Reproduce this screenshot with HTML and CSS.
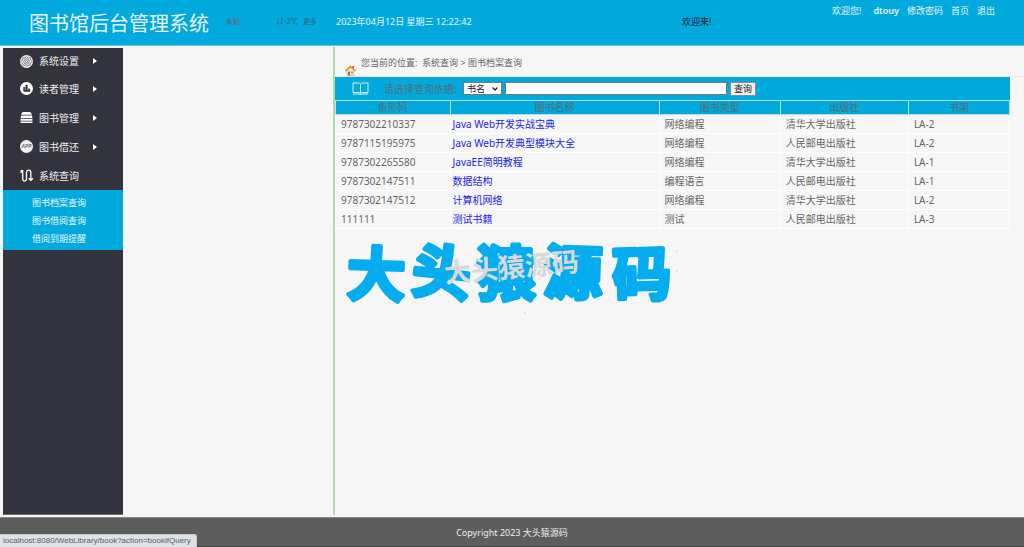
FILE: index.html
```html
<!DOCTYPE html>
<html lang="zh-CN">
<head>
<meta charset="utf-8">
<title>图书馆后台管理系统</title>
<link rel="stylesheet" href="styles.css">
</head>
<body>
<header class="header">
  <h1 class="title">图书馆后台管理系统</h1>
  <div class="weather"><a class="city" href="#">未知</a><span>11-2℃</span><a href="#">更多</a></div>
  <time class="clock">2023年04月12日 星期三 12:22:42</time>
  <div class="marquee">欢迎来!</div>
  <nav class="user">
    <span class="hello">欢迎您!</span>
    <b>dtouy</b>
    <a href="#">修改密码</a>
    <a href="#">首页</a>
    <a href="#">退出</a>
  </nav>
</header>

<div class="body">
  <nav class="sidebar">
    <button class="menu" type="button">
      <svg class="icon" viewBox="0 0 24 24"><circle cx="12" cy="12" r="12" fill="#f3f3f4"/><g fill="none" stroke="#6b6b75" stroke-width="1.6"><path d="M12 3l3 2 4 .4.6 3.8L22 12l-2.400 2.800L19 18.600l-4 .4-3 2-3-2-4-.4-.6-3.800L2 12l2.400-2.800L5 5.400 9 5z"/><circle cx="12" cy="12" r="5"/><circle cx="12" cy="12" r="2"/></g></svg>
      <span>系统设置</span><i class="arrow"></i>
    </button>
    <button class="menu" type="button">
      <svg class="icon" viewBox="0 0 24 24"><circle cx="12" cy="12" r="12" fill="#fff"/><path fill="#34343e" d="M6 9h3v8H6zM10 5h4v12h-4zM15 12h3v5h-3zM6 15h13v3H8z"/></svg>
      <span>读者管理</span><i class="arrow"></i>
    </button>
    <button class="menu" type="button">
      <svg class="icon" viewBox="0 0 24 24"><path fill="#fff" d="M6 2h12q3 0 4 5H2q1-5 4-5zM2 8.500h20l1 4.500H1zM1 14.500h22V18H1zM1 19.500h22V22H1z"/></svg>
      <span>图书管理</span><i class="arrow"></i>
    </button>
    <button class="menu" type="button">
      <svg class="icon" viewBox="0 0 24 24"><circle cx="12" cy="12" r="12" fill="#f3f3f4"/><text class="app" x="12" y="15" text-anchor="middle">APP</text></svg>
      <span>图书借还</span><i class="arrow"></i>
    </button>
    <button class="menu" type="button">
      <svg class="icon" viewBox="0 0 24 24"><path fill="none" stroke="#fff" stroke-width="2.400" d="M1 3h4v15q0 4 3.500 4t3.500-4V6q0-4 4-4t4 4v14M1 7l4-4M16 17l4 4 4-4"/></svg>
      <span>系统查询</span>
    </button>
    <ul class="submenu">
      <li><a href="#">图书档案查询</a></li>
      <li><a href="#">图书借阅查询</a></li>
      <li><a href="#">借阅到期提醒</a></li>
    </ul>
  </nav>

  <main class="content">
    <div class="crumbs">
      <svg class="house" viewBox="0 0 22 22"><path fill="#f4eee2" stroke="#bd9b77" d="M4 11v10h14V11l-7-6z"/><path fill="#7794b8" d="M12 13h4v4h-4z"/><path fill="#ad6536" d="M6 13h4v8H6z"/><path fill="none" stroke="#ef982e" stroke-width="3.500" d="M1 12L11 3l10 9"/><path fill="#c64c31" d="M15 2h3v5l-3-2z"/></svg>
      <span class="path">您当前的位置:&nbsp; 系统查询 &gt; 图书档案查询</span>
    </div>
    <div class="panel">
      <form class="search">
        <svg class="book" viewBox="0 0 34 26"><path fill="none" stroke="#d9f3fb" stroke-width="2" d="M17 4v18M17 4q-2-2-5-2H2v19h10q3 0 5 2 2-2 5-2h10V2H22q-3 0-5 2M2 24h12l3 1 3-1h12"/></svg>
        <label for="field">请选择查询依据:</label>
        <span class="picker">
          <select id="field"><option>书名</option></select>
          <svg class="chevron" viewBox="0 0 6 4"><path d="M.500.500L3 3 5.500.500" fill="none" stroke="#222" stroke-width="1.300"/></svg>
        </span>
        <input id="key" type="text" aria-label="关键字">
        <button class="go" type="button">查询</button>
      </form>
      <table class="books">
        <colgroup><col class="c-code"><col class="c-name"><col class="c-type"><col class="c-press"><col class="c-shelf"></colgroup>
        <thead><tr><th>条形码</th><th>图书名称</th><th>图书类型</th><th>出版社</th><th>书架</th></tr></thead>
        <tbody>
          <tr><td>9787302210337</td><td><a href="#">Java Web开发实战宝典</a></td><td>网络编程</td><td>清华大学出版社</td><td>LA-2</td></tr>
          <tr><td>9787115195975</td><td><a href="#">Java Web开发典型模块大全</a></td><td>网络编程</td><td>人民邮电出版社</td><td>LA-2</td></tr>
          <tr><td>9787302265580</td><td><a href="#">JavaEE简明教程</a></td><td>网络编程</td><td>清华大学出版社</td><td>LA-1</td></tr>
          <tr><td>9787302147511</td><td><a href="#">数据结构</a></td><td>编程语言</td><td>人民邮电出版社</td><td>LA-1</td></tr>
          <tr><td>9787302147512</td><td><a href="#">计算机网络</a></td><td>网络编程</td><td>清华大学出版社</td><td>LA-2</td></tr>
          <tr><td>111111</td><td><a href="#">测试书籍</a></td><td>测试</td><td>人民邮电出版社</td><td>LA-3</td></tr>
        </tbody>
      </table>
    </div>
    <svg class="brand" viewBox="0 0 350 90" role="img" aria-label="大头猿源码">
      <text class="brand-big" x="11 75 142 208 278" y="66 62 66 64 68" rotate="2 6 0 2 -2">大头猿源码</text>
      <text class="brand-small" x="110" y="54" transform="rotate(-5 110 54)">大头猿源码</text>
      <g fill="#bfe8fa"><circle cx="342" cy="22" r="1"/><circle cx="342" cy="42" r="1"/><circle cx="190" cy="84" r="1"/></g>
    </svg>
  </main>
</div>

<footer class="footer">Copyright 2023 大头猿源码</footer>
<div class="status">localhost:8080/WebLibrary/book?action=bookifQuery</div>
</body>
</html>
```

FILE: styles.css
```css
* { box-sizing: border-box; }
body {
  margin: 0;
  min-height: 100vh;
  display: flex;
  flex-direction: column;
  background: #f6f6f6;
  color: #666;
  font: 9px/14px "Noto Sans", "Noto Sans CJK SC", sans-serif;
}
a { color: inherit; text-decoration: none; }
button, input, select { font: inherit; }

.header {
  display: flex;
  align-items: center;
  height: 46px;
  padding: 0 29px 1px;
  background: #02a9dc;
  border-bottom: 1px solid #65c8e4;
  color: #e8f8fd;
}
.title { width: 197px; margin: 0; padding-top: 3px; font-size: 20px; line-height: 28px; font-weight: 400; white-space: nowrap; }
.weather {
  display: flex;
  width: 110px;
  color: #2c687f;
  font: 7px/12px "Liberation Serif", "Noto Sans CJK SC", serif;
}
.weather .city { width: 50px; color: #6b5b76; }
.weather span { width: 27px; font-size: 8px; }
.clock { width: 346px; }
.marquee { color: #123; white-space: nowrap; }
.user { display: flex; gap: 8px; margin-left: auto; align-self: flex-start; padding-top: 4px; white-space: nowrap; }
.user b { font-weight: 600; }
.hello { margin-right: 4px; }

.body { flex: 1; display: flex; padding: 2px 0 2px 3px; }
.sidebar { width: 120px; margin-right: 210px; background: #33333d; border: solid #6c6c72; border-width: 0 0 1px; }
.menu {
  display: flex;
  align-items: center;
  width: 100%;
  height: 29px;
  padding: 0 0 0 17px;
  border: 0;
  background: none;
  color: #ededee;
  font-size: 10px;
}
.menu:first-child { height: 26px; }
.icon { width: 13px; height: 13px; margin-right: 6px; }
.menu span { width: 54px; text-align: left; }
.app { font: italic 700 9px "Liberation Sans", sans-serif; fill: #666; }
.arrow { border: solid transparent; border-width: 3px 0 3px 4px; border-left-color: #fff; }
.submenu { margin: 0; padding: 4px 0 2px 29px; list-style: none; background: #02a9dc; color: #e8f8fd; line-height: 18px; }

.content { flex: 1; border-left: 2px solid #b0dab2; margin-top: -1px; }
.crumbs { display: flex; height: 30px; padding-left: 10px; border-bottom: 1px solid #e7e7e7; }
.house { width: 11px; height: 11px; margin-right: 5px; align-self: flex-end; }
.path { padding-top: 9px; }
.panel { margin-right: 14px; }
.search {
  display: flex;
  align-items: center;
  height: 23px;
  padding-left: 17px;
  background: #02a9dc;
  color: #526f7a;
  font-size: 10px;
}
.book { width: 17px; height: 13px; margin-right: 15px; }
.search label { width: 79px; }
.picker { display: flex; position: relative; }
.picker select {
  appearance: none;
  width: 39px;
  height: 13px;
  padding: 0 0 0 4px;
  border: 0;
  outline: 1px solid #777;
  outline-offset: -1px;
  background: #fff;
  color: #222;
  font-size: 9px;
}
.chevron { position: absolute; right: 4px; top: 5px; width: 6px; height: 4px; }
.search input { width: 222px; height: 13px; margin: 0 3px; padding: 0 2px; border: 1px solid #777; background: #fff; font-size: 9px; }
.go { width: 26px; height: 14px; padding: 0; border: 1px solid #8c8c8c; background: #efefef; color: #222; font-size: 9px; line-height: 11px; }

.books { width: 100%; border-collapse: collapse; table-layout: fixed; font-size: 10px; }
.c-code { width: 17%; }
.c-name { width: 31%; }
.c-type { width: 18%; }
.c-press { width: 19%; }
.c-shelf { width: 15%; }
.books th { height: 14px; padding: 0; background: #02a9dc; border: 1px solid #b0e0f0; color: #526f7a; font-weight: 400; line-height: 13px; }
.books td { height: 19px; padding: 0 5px; border: 1px solid #fff; line-height: 18px; color: #666; white-space: nowrap; }
.books td:nth-child(2) { padding-left: 2px; }
.books a { color: #2222ee; }

.brand { display: block; width: 350px; height: 90px; font-family: "Noto Sans CJK SC", sans-serif; }
.brand-big { font-size: 59px; font-weight: 700; fill: #05adf0; stroke: #05adf0; stroke-width: 4px; stroke-linejoin: round; }
.brand-small { font-size: 27px; font-weight: 700; fill: #d9d9d9; }

.footer { height: 30px; background: #5d5d5d; border-top: 1px solid #888; border-bottom: 1px solid #444; color: #eee; text-align: center; line-height: 29px; }
.status {
  position: fixed;
  left: 0;
  bottom: 0;
  padding: 0 5px 0 3px;
  border: solid #c5c9d0;
  border-width: 1px 1px 0 0;
  border-top-right-radius: 3px;
  background: #dee1e8;
  color: #5c5f64;
  font-family: "Liberation Sans", sans-serif;
  font-size: 8px;
  line-height: 12px;
}
```
